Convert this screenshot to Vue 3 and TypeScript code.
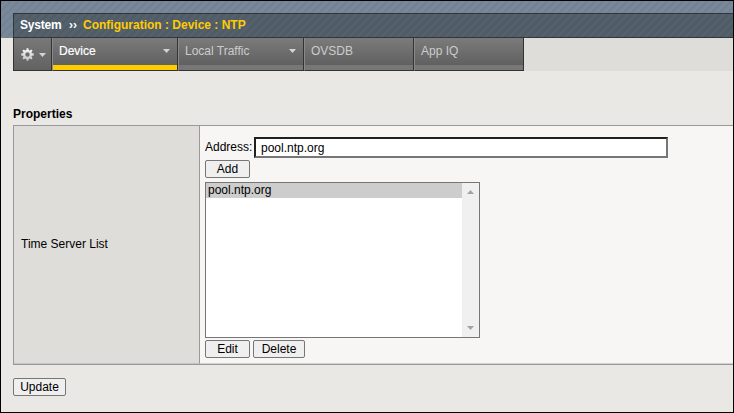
<script setup lang="ts">
import { ref } from 'vue'

interface Tab {
  label: string
  width: number
  menu: boolean
}

const tabs: Tab[] = [
  { label: 'Device', width: 126, menu: true },
  { label: 'Local Traffic', width: 126, menu: true },
  { label: 'OVSDB', width: 110, menu: false },
  { label: 'App IQ', width: 110, menu: false },
]
const activeTab = ref('Device')
const address = ref('pool.ntp.org')
const servers = ref<string[]>(['pool.ntp.org'])
const selected = ref(0)

function addServer() {
  const name = address.value.trim()
  if (name && !servers.value.includes(name)) servers.value.push(name)
}
function editServer() {
  address.value = servers.value[selected.value] ?? ''
}
function deleteServer() {
  servers.value.splice(selected.value, 1)
}
</script>

<template>
  <div class="page">
    <header class="masthead">
      <div class="titlebar">
        <span class="section">System</span>
        <span class="sep">››</span>
        <span class="crumb">Configuration : Device : NTP</span>
      </div>
    </header>

    <nav class="tabs">
      <div class="gear">
        <svg width="13" height="13" viewBox="0 0 13 13">
          <defs>
            <linearGradient id="metal" x1="0" y1="0" x2="0" y2="1">
              <stop offset="0" stop-color="#f8f8f8" />
              <stop offset="1" stop-color="#c4c4c4" />
            </linearGradient>
          </defs>
          <g fill="url(#metal)">
            <path
              fill-rule="evenodd"
              d="M5.6 0.2h1.8l.3 1.9 1 .4 1.6-1.1 1.3 1.3-1.1 1.6.4 1 1.9.3v1.8l-1.9.3-.4 1 1.1 1.6-1.3 1.3-1.6-1.1-1 .4-.3 1.9H5.6l-.3-1.9-1-.4-1.6 1.1-1.3-1.3 1.1-1.6-.4-1L.2 7.4V5.6l1.9-.3.4-1-1.1-1.6 1.3-1.3 1.6 1.1 1-.4zM6.5 4.3a2.2 2.2 0 1 0 0 4.4a2.2 2.2 0 1 0 0-4.4z"
            />
          </g>
        </svg>
        <svg class="caret" width="7" height="4" viewBox="0 0 7 4"><path d="M0 0h7L3.5 4z" /></svg>
      </div>
      <div
        v-for="tab in tabs"
        :key="tab.label"
        class="tab"
        :class="{ active: tab.label === activeTab }"
        :style="{ width: tab.width + 'px' }"
        @click="activeTab = tab.label"
      >
        <span>{{ tab.label }}</span>
        <svg v-if="tab.menu" class="caret" width="7" height="4" viewBox="0 0 7 4"><path d="M0 0h7L3.5 4z" /></svg>
      </div>
      <div class="rest"></div>
    </nav>

    <main>
      <h2>Properties</h2>
      <section class="panel">
        <div class="name">Time Server List</div>
        <div class="content">
          <div class="address">
            <label for="address">Address:</label>
            <input id="address" v-model="address" type="text" />
          </div>
          <button class="short" @click="addServer">Add</button>
          <div class="listbox">
            <ul>
              <li
                v-for="(server, i) in servers"
                :key="server"
                :class="{ selected: i === selected }"
                @click="selected = i"
              >{{ server }}</li>
            </ul>
            <div class="scrollbar">
              <svg width="7" height="4" viewBox="0 0 7 4"><path d="M3.5 0L7 4H0z" /></svg>
              <svg width="7" height="4" viewBox="0 0 7 4"><path d="M0 0h7L3.5 4z" /></svg>
            </div>
          </div>
          <div class="actions">
            <button class="short" @click="editServer">Edit</button>
            <button class="delete" @click="deleteServer">Delete</button>
          </div>
        </div>
      </section>
      <button class="update">Update</button>
    </main>
  </div>
</template>

<style>
body {
  margin: 0;
  overflow: hidden;
}
</style>

<style scoped>
* {
  box-sizing: border-box;
}
.page {
  width: 734px;
  height: 413px;
  border: 1px solid #000;
  background: #e9e8e4;
  color: #000;
  font: 12px/14px "Liberation Sans", Arial, sans-serif;
  overflow: hidden;
}
.masthead {
  height: 37px;
  padding: 12px 0 0 12px;
  background: repeating-linear-gradient(135deg, #738294 0 2.8px, #7a8999 2.8px 5.66px);
}
.titlebar {
  display: flex;
  height: 25px;
  padding: 4px 0 0 6px;
  border: 1px solid #333638;
  border-right: 0;
  background: repeating-linear-gradient(135deg, #4f5c67 0 2.8px, #54616b 2.8px 5.66px);
  font-weight: bold;
  white-space: nowrap;
}
.section {
  width: 49px;
  color: #fff;
  letter-spacing: -0.2px;
}
.sep {
  width: 14px;
  color: #fff;
}
.crumb {
  color: #fc0;
}
.tabs {
  display: flex;
  height: 33px;
  margin-left: 12px;
}
.gear {
  display: flex;
  align-items: center;
  gap: 5px;
  width: 39px;
  padding: 0 0 0 7px;
  border: 1px solid #333;
  border-top: 0;
  background: linear-gradient(#787878, #626262);
}
.gear .caret {
  margin-top: 2px;
}
.caret {
  fill: #d4d4d4;
}
.tab {
  display: flex;
  justify-content: space-between;
  padding: 6px 7px 0 6px;
  border-right: 1px solid #333;
  border-bottom: 1px solid #333;
  border-left: 1px solid #8a8a8a;
  background: linear-gradient(#777 0, #777 100%) 0 100% / 100% 5px no-repeat,
    linear-gradient(#7b7b7b, #606060 27px);
  color: #ccc;
}
.tab .caret {
  margin-top: 5px;
}
.tab.active {
  background: linear-gradient(#fc0, #fc0) 0 100% / 100% 5px no-repeat,
    linear-gradient(#7b7b7b, #606060 27px);
  color: #fff;
  -webkit-text-stroke: 0.2px #fff;
}
.rest {
  flex: 1;
  background: #deddd9;
}
main {
  padding: 36px 0 0 12px;
}
h2 {
  margin: 0;
  font: bold 12px/14px "Liberation Sans", Arial, sans-serif;
}
.panel {
  display: flex;
  height: 240px;
  margin-top: 4px;
  border-top: 1px solid #999;
  border-bottom: 1px solid #999;
  border-left: 1px solid #999;
}
.name {
  display: flex;
  align-items: center;
  width: 186px;
  padding: 0 0 2px 7px;
  border-right: 1px solid #999;
  border-bottom: 1px solid #c4c4c2;
  background: #deddd9;
}
.content {
  flex: 1;
  padding: 11px 0 0 5px;
  border-bottom: 1px solid #d2d2d0;
  background: #f7f6f4;
}
.address {
  display: flex;
  align-items: center;
  height: 21px;
  margin-bottom: 2px;
}
label {
  width: 49px;
  margin-top: -2px;
}
input {
  width: 414px;
  height: 21px;
  margin: 0;
  padding: 1px 5px;
  border: 2px solid #767676;
  border-color: #212121 #767676 #767676 #212121;
  border-radius: 0;
  outline: 0;
  background: #fff;
  color: #000;
  font: 12px "Liberation Sans", Arial, sans-serif;
}
button {
  display: block;
  height: 18px;
  margin: 0;
  padding: 0;
  border: 1px solid #767676;
  border-radius: 2px;
  background: #efefef;
  color: #000;
  font: 12px/14px "Liberation Sans", Arial, sans-serif;
}
.short {
  width: 45px;
}
.delete {
  width: 52px;
}
.update {
  width: 53px;
  margin-top: 13px;
}
.listbox {
  display: flex;
  width: 275px;
  height: 156px;
  margin-top: 4px;
  border: 1px solid #767676;
  background: #fff;
}
ul {
  flex: 1;
  margin: 0;
  padding: 0;
  list-style: none;
}
li {
  height: 15px;
  padding-left: 2px;
}
li.selected {
  background: #cdcdcd;
}
.scrollbar {
  display: flex;
  flex-direction: column;
  align-items: center;
  justify-content: space-between;
  width: 17px;
  padding: 7px 0;
  background: #f0f0f0;
}
.scrollbar svg {
  fill: #a3a3a3;
}
.actions {
  display: flex;
  gap: 3px;
  margin-top: 2px;
}
</style>
